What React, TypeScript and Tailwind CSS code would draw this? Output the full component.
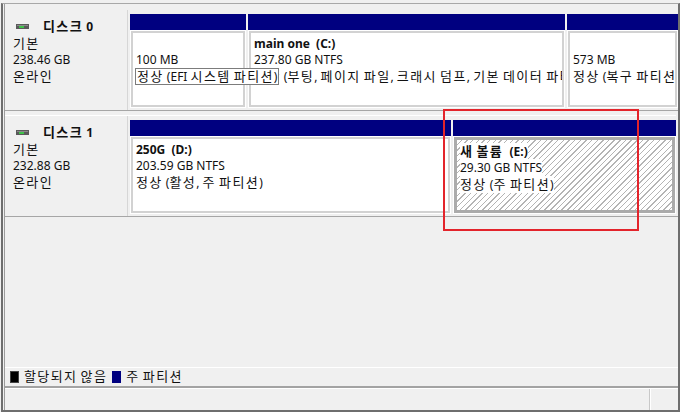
import type { ReactNode } from "react";

const font = "font-['Noto_Sans','Noto_Sans_CJK_KR',sans-serif]";

// Hangul runs are set a bit larger and wider so they take the width of the Windows UI font
function Ko({ children }: { children: string }) {
  const parts = children.split(/([\uac00-\ud7a3]+)/);
  return (
    <>
      {parts.map((p, i) =>
        /[\uac00-\ud7a3]/.test(p) ? (
          <span key={i} className="text-[13px] tracking-[1.4px]">
            {p}
          </span>
        ) : (
          <span key={i}>{p}</span>
        )
      )}
    </>
  );
}

function DriveIcon() {
  return (
    <svg width="13" height="5" viewBox="0 0 13 5" className="shrink-0">
      <rect x="0" y="0" width="13" height="5" fill="#5a5a5a" />
      <rect x="1" y="1" width="11" height="1" fill="#8a8a8a" />
      <rect x="3" y="2" width="5" height="2" fill="#3fc24a" />
    </svg>
  );
}

function DiskLabel({ name, size, pt }: { name: string; size: string; pt: string }) {
  return (
    <div
      className={`w-[123px] shrink-0 bg-[#f0f0f0] border-r border-[#d6d6d6] pl-[8px] leading-[16px] ${pt}`}
    >
      <div className="flex items-center gap-[14px] pl-[3px] font-bold">
        <DriveIcon />
        <span>
          <Ko>{name}</Ko>
        </span>
      </div>
      <div>
        <Ko>기본</Ko>
      </div>
      <div>{size}</div>
      <div>
        <Ko>온라인</Ko>
      </div>
    </div>
  );
}

function Partition({
  width,
  children,
  clip = true,
  hatched = false,
}: {
  width: string;
  children: ReactNode;
  clip?: boolean;
  hatched?: boolean;
}) {
  return (
    <div className={`${width} shrink-0 flex flex-col`}>
      <div className="h-[16px] bg-[#000080]" />
      <div className="flex-1 bg-white p-[1px]">
        <div
          className={`h-full pl-[3px] pt-[3px] leading-[16px] whitespace-nowrap ${
            clip ? "overflow-hidden" : "overflow-visible"
          } ${
            hatched
              ? "border-[3px] border-[#ababab] bg-[repeating-linear-gradient(135deg,#ffffff_0px,#ffffff_3px,#b4b4b4_3px,#b4b4b4_4px)]"
              : "border-2 border-[#d2d2d2]"
          }`}
        >
          {children}
        </div>
      </div>
    </div>
  );
}

export default function App() {
  return (
    <div className={`w-[680px] h-[412px] bg-[#f0f0f0] pt-[3px] text-[12px] text-[#111] ${font} relative overflow-hidden`}>
      <div className="h-full ml-[1px] border-t border-t-[#a8a8a8] border-l-2 border-l-[#6e6e6e] border-r-2 border-r-[#6e6e6e] border-b-2 border-b-[#6e6e6e] flex flex-col">
        <div className="flex-1 ml-[1px] border-l border-l-[#9c9c9c] pt-[6px] flex flex-col">
          {/* disk 0 */}
          <div className="h-[101px] flex border-b border-[#a6a6a6]">
            <DiskLabel name="디스크 0" size="238.46 GB" pt="pt-[8px]" />
            <div className="flex gap-[2px] pl-[2px] pt-[4px] pb-[2px]">
              <Partition width="w-[116px]" clip={false}>
                <div className="h-[16px]" />
                <div>100 MB</div>
                <div>
                  <span className="relative z-10 inline-block bg-white border border-[#7c7c7c] leading-[15px] -ml-[1px] pl-[1px] pr-[1px]">
                    <Ko>정상 (EFI 시스템 파티션)</Ko>
                  </span>
                </div>
              </Partition>
              <Partition width="w-[317px]">
                <div className="font-bold">main one&nbsp;&nbsp;(C:)</div>
                <div>237.80 GB NTFS</div>
                <div>
                  <Ko>정상 (부팅, 페이지 파일, 크래시 덤프, 기본 데이터 파티션)</Ko>
                </div>
              </Partition>
              <Partition width="w-[111px]">
                <div className="h-[16px]" />
                <div>573 MB</div>
                <div>
                  <Ko>정상 (복구 파티션)</Ko>
                </div>
              </Partition>
            </div>
          </div>

          {/* disk 1 */}
          <div className="h-[106px] flex border-t-[4px] border-[#f0f0f0] border-b border-b-[#a6a6a6]">
            <div className="flex border-t border-white">
              <DiskLabel name="디스크 1" size="232.88 GB" pt="pt-[8px]" />
              <div className="flex gap-[2px] pl-[2px] pt-[4px] pb-[2px]">
                <Partition width="w-[321px]">
                  <div className="font-bold">250G&nbsp;&nbsp;(D:)</div>
                  <div>203.59 GB NTFS</div>
                  <div>
                    <Ko>정상 (활성, 주 파티션)</Ko>
                  </div>
                </Partition>
                <Partition width="w-[223px]" hatched>
                  <div>
                    <span className="font-bold bg-white">
                      <Ko>새 볼륨</Ko>&nbsp;&nbsp;(E:)
                    </span>
                  </div>
                  <div>
                    <span className="bg-white">29.30 GB NTFS</span>
                  </div>
                  <div>
                    <span className="bg-white">
                      <Ko>정상 (주 파티션)</Ko>
                    </span>
                  </div>
                </Partition>
              </div>
            </div>
          </div>

          <div className="flex-1" />

          {/* legend */}
          <div className="h-[21px] border-t border-white border-b-2 border-b-[#a3a3a3] flex items-center gap-[5px] pl-[5px]">
            <span className="w-[9px] h-[12px] bg-black border border-[#444]" />
            <span>
              <Ko>할당되지 않음</Ko>
            </span>
            <span className="w-[9px] h-[12px] bg-[#000080]" />
            <span>
              <Ko>주 파티션</Ko>
            </span>
          </div>

          {/* status bar */}
          <div className="h-[22px] flex border-t border-white">
            <div className="flex-1" />
            <div className="w-[29px] border-l border-l-[#c8c8c8]">
              <div className="h-full border-l border-white" />
            </div>
          </div>
        </div>
      </div>

      {/* highlight */}
      <div className="absolute left-[443px] top-[109px] w-[196px] h-[122px] border-2 border-[#e3242b] pointer-events-none" />
    </div>
  );
}
